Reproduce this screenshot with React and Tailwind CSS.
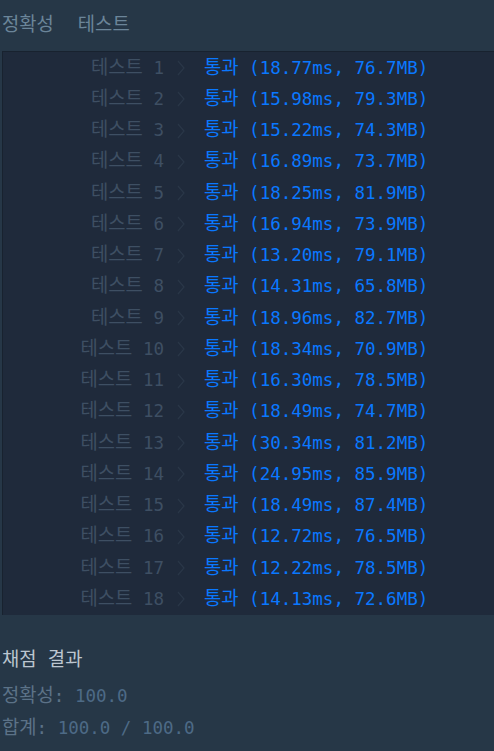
import React from 'react';

const results = [
  ['18.77ms', '76.7MB'],
  ['15.98ms', '79.3MB'],
  ['15.22ms', '74.3MB'],
  ['16.89ms', '73.7MB'],
  ['18.25ms', '81.9MB'],
  ['16.94ms', '73.9MB'],
  ['13.20ms', '79.1MB'],
  ['14.31ms', '65.8MB'],
  ['18.96ms', '82.7MB'],
  ['18.34ms', '70.9MB'],
  ['16.30ms', '78.5MB'],
  ['18.49ms', '74.7MB'],
  ['30.34ms', '81.2MB'],
  ['24.95ms', '85.9MB'],
  ['18.49ms', '87.4MB'],
  ['12.72ms', '76.5MB'],
  ['12.22ms', '78.5MB'],
  ['14.13ms', '72.6MB'],
];

const font = { fontFamily: '"DejaVu Sans Mono", "Noto Sans CJK KR", monospace' };

// Hangul runs a little larger than the Latin monospace, as in the reference
function Ko({ children }) {
  return <span className="text-[18.8px]">{children}</span>;
}

function Chevron() {
  return (
    <svg width="8" height="16" viewBox="0 0 8 16" className="block">
      <path d="M1 1 L7 8 L1 15" fill="none" stroke="#2a3748" strokeWidth="1.2" />
    </svg>
  );
}

export default function App() {
  return (
    <div className="min-h-[751px] bg-[#263747] text-[17.5px] leading-none" style={font}>
      {/* Heading */}
      <div className="flex h-[51px] items-center pl-[2px] text-[#6b8599]">
        <Ko>정확성</Ko>
        <span className="ml-[24px]">
          <Ko>테스트</Ko>
        </span>
      </div>

      {/* Result table */}
      <div className="ml-[2px] border-l border-t border-[#18222f] bg-[#1f2a3b]">
        {results.map(([time, mem], i) => (
          <div key={i} className="flex h-[31.25px] items-center pt-[1px]">
            <div className="w-[161px] whitespace-pre text-right text-[#3e4f63]">
              <Ko>테스트</Ko> {i + 1}
            </div>
            <div className="ml-[13px] w-[27px]">
              <Chevron />
            </div>
            <div className="whitespace-pre text-[#0a78ff]">
              <Ko>통과</Ko> ({time}, {mem})
            </div>
          </div>
        ))}
      </div>

      {/* Summary */}
      <div className="pl-[2px] pt-[36px]">
        <div className="h-[20px] text-[#bcc6d0]">
          <Ko>채점 결과</Ko>
        </div>
        <div className="mt-[16px] h-[20px] text-[#5c7287]">
          <Ko>정확성</Ko>: <span className="text-[#4d6a86]">100.0</span>
        </div>
        <div className="mt-[12px] h-[20px] text-[#5c7287]">
          <Ko>합계</Ko>: <span className="text-[#4d6a86]">100.0 / 100.0</span>
        </div>
      </div>
    </div>
  );
}
